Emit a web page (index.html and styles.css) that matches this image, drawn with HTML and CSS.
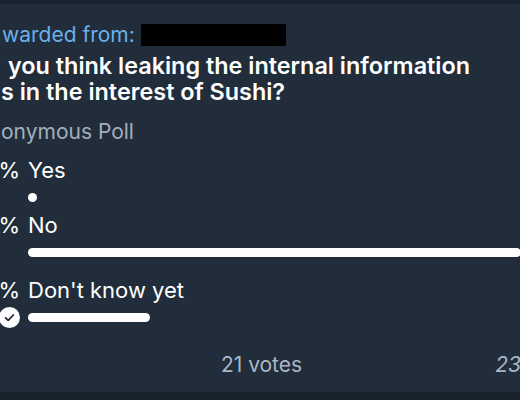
FILE: index.html
```html
<!DOCTYPE html>
<html>
<head>
<meta charset="utf-8">
<link rel="stylesheet" href="styles.css">
</head>
<body>
<div class="bubble">
  <div class="fwd">warded from: <span class="redact"></span></div>
  <div class="question">
    <div class="q1">you think leaking the internal information</div>
    <div class="q2">s in the interest of Sushi?</div>
  </div>
  <div class="anon">onymous Poll</div>
  <div class="options">
    <div class="opt">
      <div class="pct">%</div>
      <div class="label">Yes</div>
      <div class="mark"></div>
      <div class="track"><div class="bar" style="width:9px"></div></div>
    </div>
    <div class="opt opt-wide">
      <div class="pct">%</div>
      <div class="label">No</div>
      <div class="mark"></div>
      <div class="track"><div class="bar" style="width:100%"></div></div>
    </div>
    <div class="opt">
      <div class="pct">%</div>
      <div class="label">Don't know yet</div>
      <div class="mark">
        <span class="check"><svg width="21" height="21" viewBox="0 0 21 21"><circle cx="10.5" cy="10.5" r="10.5" fill="#ffffff"/><path d="M6.6 10.8 L9.2 13.3 L14.3 8" fill="none" stroke="#212d3b" stroke-width="1.8" stroke-linecap="round" stroke-linejoin="round"/></svg></span>
      </div>
      <div class="track"><div class="bar" style="width:122px"></div></div>
    </div>
  </div>
  <div class="footer">
    <span></span>
    <span class="votes">21 votes</span>
    <span class="time">23</span>
  </div>
</div>
</body>
</html>
```

FILE: styles.css
```css
* { box-sizing: border-box; }
html, body {
  margin: 0;
  padding: 0;
}
body {
  width: 520px;
  height: 400px;
  overflow: hidden;
  background: #19232e;
  font-family: Inter, "Noto Sans", sans-serif;
  color: #ffffff;
}
.bubble {
  margin-top: 4px;
  margin-left: -10px;
  width: 541px;
  height: 388px;
  background: #212d3b;
  padding: 18px 10px 0 12px;
  display: flex;
  flex-direction: column;
}
.fwd {
  font-size: 21px;
  line-height: 25px;
  color: #6ab0ea;
  white-space: nowrap;
}
.redact {
  display: inline-block;
  width: 145px;
  height: 22px;
  background: #000;
  vertical-align: -4px;
}
.question {
  margin-top: 6px;
  font-size: 23.4px;
  line-height: 26px;
  font-weight: 600;
  white-space: nowrap;
}
.q1 { margin-left: 6px; }
.q2 { margin-left: -1px; }
.anon {
  margin-top: 14px;
  margin-left: -1px;
  font-size: 21px;
  line-height: 25px;
  color: #a2afbc;
}
.options {
  margin-top: 13px;
  display: flex;
  flex-direction: column;
  gap: 10px;
}
.opt {
  display: grid;
  grid-template-columns: 20px 1fr;
  column-gap: 8px;
  row-gap: 9px;
  align-items: center;
  margin-left: -2px;
}
.opt-wide { margin-bottom: 10px; }
.pct, .label {
  font-size: 22px;
  line-height: 26px;
  white-space: nowrap;
}
.pct { justify-self: end; }
.mark {
  height: 10px;
  position: relative;
}
.check {
  position: absolute;
  right: 0;
  top: -5px;
  width: 21px;
  height: 21px;
}
.check svg { display: block; }
.track { height: 10px; display: flex; align-items: center; }
.bar {
  height: 9px;
  background: #ffffff;
  border-radius: 5px;
}
.footer {
  margin-top: 30px;
  display: grid;
  grid-template-columns: 1fr auto 1fr;
  font-size: 21px;
  line-height: 25px;
  color: #a9b7c5;
}
.time {
  text-align: right;
  font-style: italic;
}
```
